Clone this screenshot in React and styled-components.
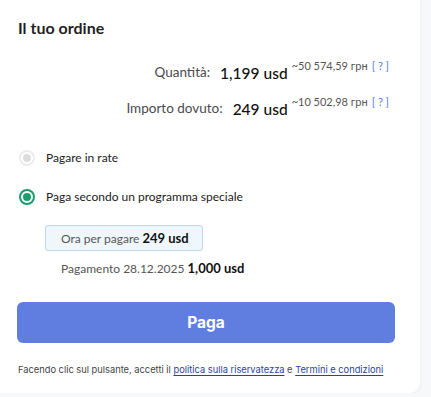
import React from "react";
import styled, { createGlobalStyle } from "styled-components";

const Global = createGlobalStyle`
  html, body { margin: 0; padding: 0; background: #f6f8fa; }
  body { font-family: Lato, "Open Sans", sans-serif; }
`;

const Card = styled.div`
  width: 420px;
  box-sizing: border-box;
  background: #fff;
  border-radius: 0 0 10px 0;
  box-shadow: 0 1px 4px rgba(30, 60, 90, 0.06);
  padding: 16px 25px 16px 17px;
  display: flex;
  flex-direction: column;
`;

const Title = styled.h2`
  margin: 0 0 0 1px;
  font-size: 16px;
  line-height: 24px;
  font-weight: 700;
  color: #1f1f24;
`;

const Summary = styled.div`
  display: flex;
  flex-direction: column;
  align-items: flex-end;
  gap: 12px;
  margin-top: 20px;
  padding-right: 6px;
`;

const SumRow = styled.div`
  display: flex;
  align-items: flex-start;
  white-space: nowrap;
`;

const SumLabel = styled.span`
  font-size: 13.5px;
  color: #4a4a4f;
  margin-top: 4px;
  margin-right: 10px;
`;

const SumValue = styled.span`
  font-size: 15.5px;
  font-weight: 500;
  color: #111;
  margin-top: 2px;
  line-height: 22px;
`;

const Conv = styled.span`
  font-size: 11px;
  color: #555;
  margin-left: 4px;
  line-height: 12px;
`;

const Help = styled.span`
  color: #4a7cf6;
  margin-left: 4px;
  font-size: 11px;
  line-height: 12px;
`;

const Options = styled.div`
  display: flex;
  flex-direction: column;
  gap: 19px;
  margin: 28px 0 0 2px;
`;

const Option = styled.label`
  display: flex;
  align-items: center;
  gap: 11px;
  font-size: 12px;
  color: #222;
  line-height: 20px;
`;

const Radio = styled.span`
  width: 16px;
  height: 16px;
  box-sizing: border-box;
  border-radius: 50%;
  border: 2px solid ${(p) => (p.$checked ? "#1a9e6e" : "#ececec")};
  background: #fff;
  display: flex;
  align-items: center;
  justify-content: center;
  &::after {
    content: "";
    width: 8px;
    height: 8px;
    border-radius: 50%;
    background: ${(p) => (p.$checked ? "#1a9e6e" : "#dcdcdc")};
  }
`;

const Plan = styled.div`
  display: flex;
  flex-direction: column;
  align-items: flex-start;
  margin-top: 18px;
  margin-left: 28px;
`;

const NowBox = styled.div`
  background: #f0f7fc;
  border: 1px solid #b9d9ee;
  border-radius: 3px;
  padding: 4px 13px 3px 15px;
  font-size: 12px;
  color: #555;
  line-height: 17px;
  white-space: nowrap;
`;

const Strong = styled.b`
  font-size: 13px;
  font-weight: 700;
  color: #111;
`;

const Later = styled.div`
  margin-top: 9px;
  margin-left: 16px;
  font-size: 12px;
  color: #555;
  line-height: 17px;
  white-space: nowrap;
`;

const PayButton = styled.button`
  margin-top: 25px;
  height: 41px;
  border: none;
  border-radius: 6px;
  background: #5f7ee0;
  color: #fff;
  font-family: Inter, Roboto, sans-serif;
  font-size: 15.5px;
  font-weight: 700;
  cursor: pointer;
`;

const Terms = styled.p`
  margin: 20px 0 0 1px;
  font-family: Inter, Roboto, sans-serif;
  font-size: 9.3px;
  color: #444;
  line-height: 14px;
  white-space: nowrap;
`;

const Link = styled.a`
  color: #2d3f9e;
  text-decoration: underline;
  text-underline-offset: 2px;
`;

export default function App() {
  return (
    <>
      <Global />
      <Card>
        <Title>Il tuo ordine</Title>
        <Summary>
          <SumRow>
            <SumLabel>Quantità:</SumLabel>
            <SumValue>1,199 usd</SumValue>
            <Conv>~50 574,59 грн</Conv>
            <Help>[ ? ]</Help>
          </SumRow>
          <SumRow>
            <SumLabel>Importo dovuto:</SumLabel>
            <SumValue>249 usd</SumValue>
            <Conv>~10 502,98 грн</Conv>
            <Help>[ ? ]</Help>
          </SumRow>
        </Summary>
        <Options>
          <Option>
            <Radio />
            Pagare in rate
          </Option>
          <Option>
            <Radio $checked />
            Paga secondo un programma speciale
          </Option>
        </Options>
        <Plan>
          <NowBox>
            Ora per pagare <Strong>249 usd</Strong>
          </NowBox>
          <Later>
            Pagamento 28.12.2025 <Strong>1,000 usd</Strong>
          </Later>
        </Plan>
        <PayButton>Paga</PayButton>
        <Terms>
          Facendo clic sul pulsante, accetti il{" "}
          <Link href="#">politica sulla riservatezza</Link> e{" "}
          <Link href="#">Termini e condizioni</Link>
        </Terms>
      </Card>
    </>
  );
}
